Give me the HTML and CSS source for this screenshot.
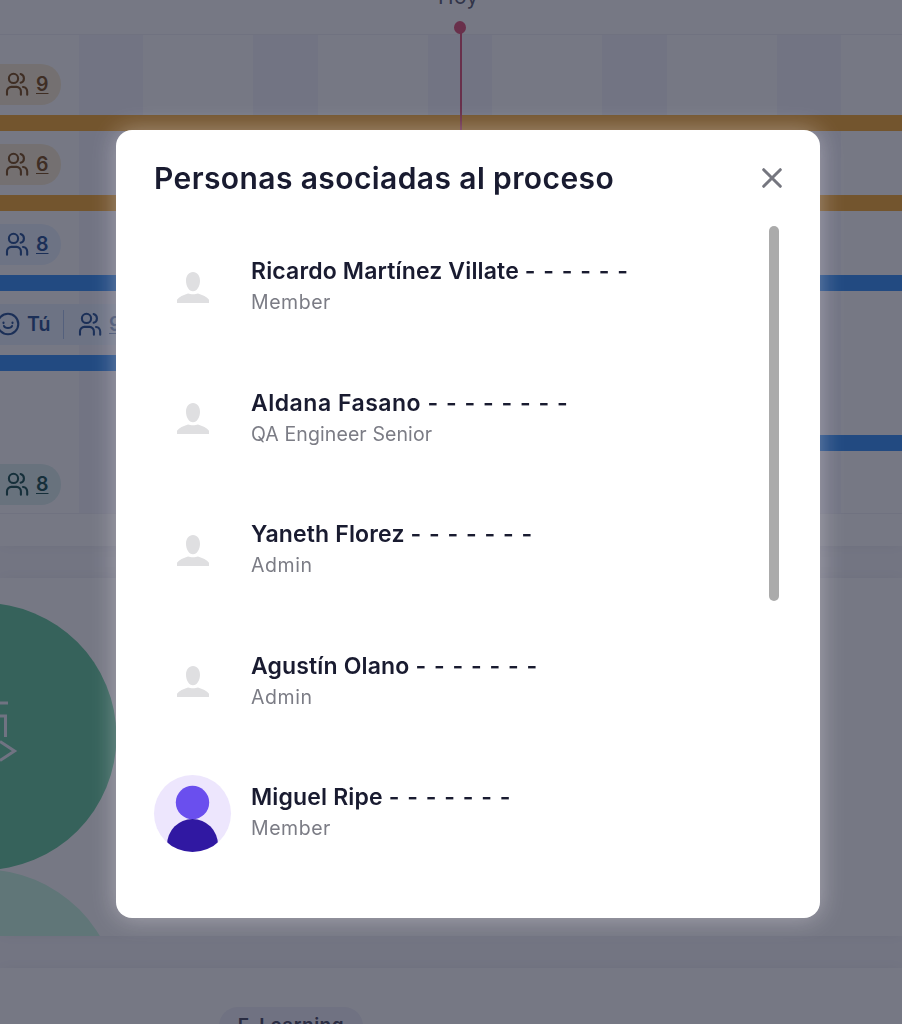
FILE: index.html
```html
<!DOCTYPE html>
<html lang="es">
<head>
    <meta charset="utf-8">
    <title>Personas asociadas al proceso</title>
    <meta name="viewport" content="width=device-width, initial-scale=1.0">
    <link rel="stylesheet" href="styles.css">
</head>
<body>
    <svg width="0" height="0" class="sprite">
        <symbol id="users" viewBox="0 0 24 24">
            <circle cx="8.5" cy="6.4" r="4.6"/>
            <path d="M15.6 2.1a4.5 4.5 0 0 1 0 8.7M2 22.7v-3.5a4.3 4.3 0 0 1 4.3-4.3h5.3a4.3 4.3 0 0 1 4.3 4.3v3.5M18 15a4.8 4.8 0 0 1 4.2 4.6v3.1"/>
        </symbol>
        <symbol id="person" viewBox="0 0 32 32">
            <path d="M16 0c4.200 0 7 3.500 7 8.700 0 5.600-3 10.500-7 10.500S9 14.300 9 8.700C9 3.500 11.800 0 16 0zM0 31v-3.200c2-2.700 6.500-4.800 11-6.200 2.500 1 7.500 1 10 0 4.500 1.400 9 3.500 11 6.200V31z"/>
        </symbol>
    </svg>

    <main class="page">
        <section class="card gantt">
            <div class="gantt-head"></div>
            <div class="gantt-grid">
                <div class="gantt-row orange">
                    <div class="pill"><svg class="icon"><use href="#users"/></svg><a>9</a></div>
                    <div class="bar"></div>
                </div>
                <div class="gantt-row orange">
                    <div class="pill"><svg class="icon"><use href="#users"/></svg><a>6</a></div>
                    <div class="bar"></div>
                </div>
                <div class="gantt-row blue">
                    <div class="pill"><svg class="icon"><use href="#users"/></svg><a>8</a></div>
                    <div class="bar"></div>
                </div>
                <div class="gantt-row blue">
                    <div class="pill wide">
                        <svg class="icon smile" viewBox="0 0 24 24"><circle cx="12" cy="12" r="10.300"/><path d="M8 14c1 2.700 7 2.700 8 0M7.500 10.500v.6M16.500 10.500v.6"/></svg>
                        <span class="you">Tú</span>
                        <svg class="icon"><use href="#users"/></svg><a class="faded">9</a>
                    </div>
                    <div class="bar half-left"></div>
                </div>
                <div class="gantt-row blue">
                    <div class="bar half-right"></div>
                </div>
                <div class="gantt-row teal">
                    <div class="pill"><svg class="icon"><use href="#users"/></svg><a>8</a></div>
                </div>
            </div>
            <div class="today"><span>Hoy</span></div>
        </section>

        <section class="card bubbles">
            <svg width="140" height="358" viewBox="0 0 140 358">
                <circle cx="-17" cy="427.500" r="136" fill="#c8f9e1"/>
                <circle cx="-17" cy="158.500" r="133.500" fill="#5fc898"/>
                <path d="M0 125h8M0 138h5.500v21M0 163.500l14.500 9.500L0 182.500" fill="none" stroke="#eff2fa" stroke-width="3"/>
            </svg>
        </section>

        <section class="card courses">
            <span class="tag">E-Learning</span>
        </section>
    </main>

    <div class="overlay">
        <div class="modal">
            <div class="modal-header">
                <h2>Personas asociadas al proceso</h2>
                <button class="close" aria-label="Cerrar">
                    <svg width="20" height="20" viewBox="0 0 20 20"><path d="M1.700 1.700l16.600 16.600M18.300 1.700L1.700 18.300"/></svg>
                </button>
            </div>
            <div class="modal-body">
                <ul class="people">
                    <li>
                        <div class="avatar"><svg class="person"><use href="#person"/></svg></div>
                        <div class="info"><h3>Ricardo Martínez Villate <span>------</span></h3><p>Member</p></div>
                    </li>
                    <li>
                        <div class="avatar"><svg class="person"><use href="#person"/></svg></div>
                        <div class="info"><h3 class="loose">Aldana Fasano <span>--------</span></h3><p class="tight">QA Engineer Senior</p></div>
                    </li>
                    <li>
                        <div class="avatar"><svg class="person"><use href="#person"/></svg></div>
                        <div class="info"><h3>Yaneth Florez <span>-------</span></h3><p>Admin</p></div>
                    </li>
                    <li>
                        <div class="avatar"><svg class="person"><use href="#person"/></svg></div>
                        <div class="info"><h3>Agustín Olano <span>-------</span></h3><p>Admin</p></div>
                    </li>
                    <li>
                        <div class="avatar photo">
                            <svg width="77" height="77" viewBox="0 0 77 77">
                                <circle cx="38.500" cy="27.500" r="16.700" fill="#6a4fee"/>
                                <ellipse cx="38.500" cy="70" rx="25.500" ry="26" fill="#3018a2"/>
                            </svg>
                        </div>
                        <div class="info"><h3>Miguel Ripe <span>-------</span></h3><p>Member</p></div>
                    </li>
                </ul>
                <div class="scrollbar"></div>
            </div>
        </div>
    </div>
</body>
</html>
```
FILE: styles.css
```css
* {
    box-sizing: border-box;
}

body {
    margin: 0;
    height: 100vh;
    overflow: hidden;
    font-family: Inter, "Open Sans", sans-serif;
    color: #191b30;
    background-color: #f8f8fb;
}

h2, h3, p, ul {
    margin: 0;
    padding: 0;
}

.sprite {
    position: absolute;
}

.page {
    display: flex;
    flex-direction: column;
    gap: 32px;
    height: 1024px;
    overflow: hidden;
}

.card {
    background-color: #fff;
    box-shadow: 0 0 14px rgba(20, 20, 60, 0.06);
    flex: none;
}

/* Linea de tiempo */
.gantt {
    position: relative;
    height: 546px;
}

.gantt-head {
    height: 34px;
}

.gantt-grid {
    height: 480px;
    padding-top: 29px;
    border-top: 1px solid #f0f0f6;
    border-bottom: 1px solid #f0f0f6;
    background: repeating-linear-gradient(90deg, #f4f4fc 0 64px, #fff 64px 174.5px) 79px 0 no-repeat;
}

.gantt-row {
    display: flex;
    flex-direction: column;
    height: 80px;
    padding-bottom: 13px;
}

.pill {
    display: flex;
    align-items: center;
    width: 61px;
    height: 41px;
    padding: 0 0 1px 5px;
    border-radius: 0 20px 20px 0;
    font-size: 19.5px;
    font-weight: 600;
}

.pill a {
    margin: 0 0 1px 7px;
    text-decoration: underline;
    text-decoration-thickness: 1px;
    text-underline-offset: 2px;
}

.pill.wide {
    width: 150px;
    padding-left: 0;
}

.icon {
    flex: none;
    width: 24px;
    height: 24px;
    fill: none;
    stroke: currentColor;
    stroke-width: 2.1;
    stroke-linecap: round;
}

.smile {
    margin-left: -4px;
}

.you {
    width: 37px;
    height: 29px;
    margin: 0 14px 0 7px;
    line-height: 29px;
    border-right: 1px solid #aac4ea;
}

.pill .faded {
    opacity: 0.6;
}

.bar {
    height: 16px;
    margin-top: auto;
}

.half-left {
    width: 400px;
}

.half-right {
    width: 400px;
    margin-left: auto;
}

.orange .bar { background-color: #f7a72a; }
.orange .pill { background-color: #faeccf; color: #764610; }
.blue .bar { background-color: #2d8cf7; }
.blue .pill { background-color: #e8f2ff; color: #1c4a90; }
.teal .pill { background-color: #dcf0ee; color: #0f4a48; }

.today {
    position: absolute;
    top: 0;
    left: 454px;
    width: 12px;
    height: 150px;
    background: linear-gradient(#de4b70, #de4b70) 6px 27px / 2px 123px no-repeat;
}

.today::before {
    content: "";
    position: absolute;
    top: 21px;
    width: 12px;
    height: 13px;
    border-radius: 50%;
    background-color: #de4b70;
}

.today span {
    position: absolute;
    top: -15px;
    left: -16px;
    font-size: 21px;
    line-height: 24px;
    letter-spacing: 0.4px;
    color: #55576b;
}

.bubbles {
    height: 358px;
}

.bubbles svg {
    display: block;
}

.courses {
    height: 200px;
    padding: 39px 0 0 219px;
}

.tag {
    display: block;
    width: 144px;
    height: 38px;
    border-radius: 19px;
    background-color: #f0f0fa;
    color: #40425a;
    font-size: 19px;
    font-weight: 600;
    line-height: 37px;
    letter-spacing: 0.5px;
    text-align: center;
}

/* Modal */
.overlay {
    position: fixed;
    inset: 0;
    padding: 130px 82px 106px 116px;
    background-color: rgba(26, 30, 50, 0.6);
}

.modal {
    height: 788px;
    padding: 26px 38px 0 38px;
    border-radius: 16px;
    background-color: #fff;
    box-shadow: 0 0 24px rgba(255, 248, 255, 0.38);
}

.modal-header {
    display: flex;
    justify-content: space-between;
    align-items: center;
    height: 44px;
}

.modal-header h2 {
    font-size: 30px;
    font-weight: 600;
    line-height: 44px;
    letter-spacing: 0.4px;
}

.close {
    display: flex;
    padding: 0;
    border: none;
    background: none;
    cursor: pointer;
}

.close path {
    stroke: #75767f;
    stroke-width: 3;
    stroke-linecap: round;
}

.modal-body {
    display: flex;
    justify-content: space-between;
    margin-top: 26px;
    padding-right: 3px;
}

.people {
    list-style: none;
    padding-top: 23px;
}

.people li {
    display: flex;
    align-items: center;
    gap: 20px;
    height: 77px;
    margin-bottom: 54.5px;
}

.avatar {
    display: flex;
    align-items: center;
    justify-content: center;
    width: 77px;
    height: 77px;
    border-radius: 50%;
    overflow: hidden;
}

.avatar.photo {
    background-color: #ede6fd;
}

.person {
    width: 32px;
    height: 32px;
    fill: #dfdfe1;
}

.info {
    padding-bottom: 1px;
}

.people h3 {
    font-size: 23px;
    font-weight: 600;
    line-height: 30px;
    letter-spacing: 0.15px;
    white-space: nowrap;
}

.people h3.loose {
    letter-spacing: 0.5px;
}

.people h3 span {
    letter-spacing: 7.8px;
}

.people p {
    font-size: 19.5px;
    line-height: 32px;
    letter-spacing: 0.55px;
    color: #7b7c85;
}

.people p.tight {
    letter-spacing: 0.1px;
}

.scrollbar {
    width: 10px;
    height: 375px;
    border-radius: 5px;
    background-color: #ababab;
}
```
